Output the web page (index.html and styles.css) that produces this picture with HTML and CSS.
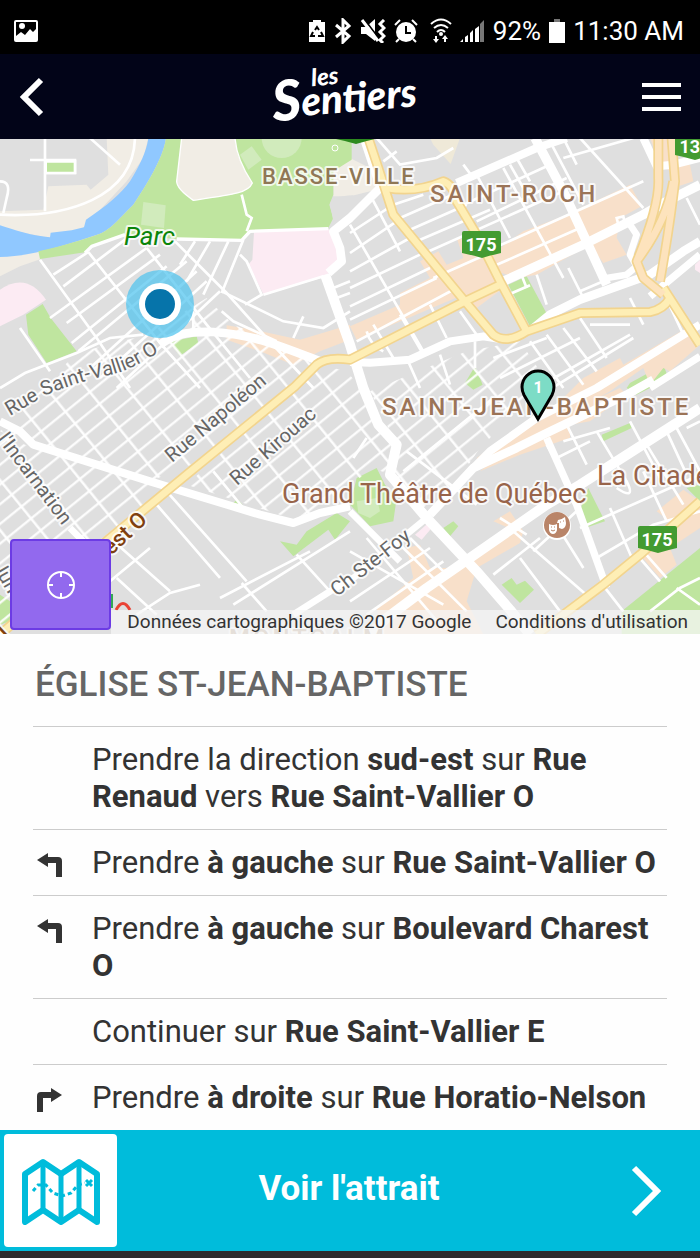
FILE: index.html
```html
<!DOCTYPE html>
<html lang="fr">
  <head>
    <meta charset="UTF-8" />
    <meta name="viewport" content="width=device-width, initial-scale=1" />
    <title>Les Sentiers</title>
    <link rel="stylesheet" href="styles.css">
  </head>
  <body>
    <div class="status">
      <svg class="status-photo" width="24" height="24" viewBox="0 0 24 24">
        <rect x="1" y="2" width="22" height="20" rx="1" fill="none" stroke="#fff" stroke-width="2" />
        <circle cx="8" cy="7" r="3" fill="#fff" />
        <path d="M2 17l5-4 4 3 5-6 3 3 3-3v11H2z" fill="#fff" />
      </svg>
      <!-- battery saver -->
      <svg width="18" height="24" viewBox="0 0 18 24">
        <path d="M1 3h4V1h8v2h4v20H1z" fill="#fff" />
        <path d="M7 11l2-3 2 3M5 13l-2 4h4M13 13l2 4h-5" fill="none" stroke="#000" stroke-width="2" />
      </svg>
      <!-- bluetooth -->
      <svg width="18" height="26" viewBox="0 0 18 26">
        <path d="M2 7l13 11-6 6V2l6 6L2 19" fill="none" stroke="#fff" stroke-width="3" />
      </svg>
      <!-- vibrate -->
      <svg width="26" height="24" viewBox="0 0 26 24">
        <path d="M1 8h5l9-8v22l-9-7H1z" fill="#fff" />
        <path d="M4 0l16 21" stroke="#000" stroke-width="2" />
        <path d="M2 1l16 21" stroke="#fff" stroke-width="3" />
        <path d="M24 1l-4 4 4 4-4 4 4 4-4 4 3 3" fill="none" stroke="#fff" stroke-width="3" />
      </svg>
      <!-- alarm -->
      <svg width="24" height="24" viewBox="0 0 24 24">
        <circle cx="12" cy="13" r="10" fill="#fff" />
        <path d="M1 6l5-5M23 6l-5-5M5 20l-3 3M19 20l3 3" stroke="#fff" stroke-width="2" />
        <path d="M12 7v7h5" fill="none" stroke="#000" stroke-width="2" />
      </svg>
      <svg class="status-wifi" width="22" height="26" viewBox="0 0 22 26">
        <path d="M1 6q10-9 20 0M4 10q7-6 14 0M7 14q4-4 8 0" fill="none" stroke="#fff" stroke-width="2" />
        <circle cx="11" cy="16" r="2" fill="#fff" />
        <path d="M6 18v5M15 24v-4" stroke="#fff" stroke-width="2" />
        <path d="M3 21h6l-3 4zM12 21h6l-3-4z" fill="#fff" />
      </svg>
      <svg width="25" height="24" viewBox="0 0 25 24">
        <path d="M0 23l3-3v3zM5 23v-5l3-2v7zM10 23v-9l3-3v12zM15 23V10l4-3v16z" fill="#fff" />
        <path d="M20 23V5l4-4v22z" fill="#777" />
      </svg>
      <span>92%</span>
      <svg class="status-battery" width="16" height="24" viewBox="0 0 16 24">
        <path d="M0 3h16v21H0z" fill="#fff" />
        <path d="M5 0h6v3H5z" fill="#777" />
      </svg>
      <span class="status-time">11:30 AM</span>
    </div>

    <header class="header">
      <a href="#" aria-label="Retour">
        <svg width="26" height="40" viewBox="0 0 26 40">
          <path d="M22 3L5 20l17 17" fill="none" stroke="#fff" stroke-width="6" />
        </svg>
      </a>
      <svg class="logo" width="170" height="66" viewBox="0 0 170 66">
        <g transform="rotate(-5 90 46)">
          <text class="logo-small" x="55" y="19">les</text>
          <text class="logo-text" x="14" y="48"><tspan class="logo-cap" dy="3">S</tspan><tspan dy="-3">entiers</tspan></text>
        </g>
      </svg>
      <button class="menu" aria-label="Menu">
        <span></span>
        <span></span>
        <span></span>
      </button>
    </header>

    <div class="map">
      <svg class="map-canvas" viewBox="0 1 700 495">
        <defs>
          <pattern id="blocks" width="94" height="46" patternUnits="userSpaceOnUse" patternTransform="translate(20 12) rotate(-39)">
            <path d="M0 4H94M4 0V46" stroke="#fff" stroke-width="7" />
          </pattern>
          <path id="saintVallier" d="M10 278L46 257Q80 243 110 237Q140 230 180 199" />
          <path id="shield" d="M2 0H37Q39 0 39 2V22Q30 24 20 27Q10 24 0 22V2Q0 0 2 0Z" />
        </defs>

        <rect y="1" width="700" height="495" fill="#dfdfdf" />
        <g transform="scale(.33333)">
          <!-- ground -->
          <g fill="#f1ede5">
            <path d="M320 0L445 0L430 60L380 130L250 270L150 300L0 270V220L130 215L145 145L260 140L272 155L325 110Z" />
            <path d="M0 350L118 335L125 362L60 385L0 415Z" />
            <path d="M1050 60L1150 110V150L1050 175H1000V100Z" />
            <path d="M1300 20L1352 78L1380 0H1290Z" fill="#efe9d8" />
          </g>
          <path d="M445 0H498C490 60 440 140 400 200C350 250 330 275 300 287C200 320 100 355 0 357V262C40 275 100 295 150 298L152 284L215 277L252 268L258 245C320 205 365 165 390 130C420 80 440 40 445 0Z" fill="#90c8ff" />
          <g fill="#bfe59f">
            <path d="M498 0H1055V65L1000 100V170L988 200L1000 240L985 270L750 283L728 305L530 303L375 290L270 325L260 342L120 363L115 340C200 320 250 305 300 287C330 275 350 250 400 200C440 140 490 60 498 0Z" />
            <path d="M78 530L128 498L152 540L230 640L140 675L85 590Z" />
            <path d="M508 612L590 595L595 615L540 653Z" />
            <path d="M1525 440L1580 415L1642 530L1590 565Z" />
            <path d="M1890 735L1990 680L2005 720L1950 750L1910 770L1880 750Z" />
            <path d="M1395 735L1425 685L1448 740L1420 755Z" />
            <path d="M840 1210L890 1220L920 1180L1010 1125L1050 1150L1005 1205L985 1175L880 1255Z" />
            <path d="M700 1095L712 1083L728 1100ZM0 1370L30 1390V1450L0 1460Z" />
            <path d="M1070 1020L1130 990L1155 1040L1190 1080L1180 1150L1110 1165L1050 1100Z" />
            <path d="M1330 1170L1360 1150L1375 1165L1350 1195Z" />
            <path d="M1505 1340L1535 1320L1550 1340L1575 1328L1602 1355L1560 1395Z" />
            <path d="M1735 1130L1765 1050L1815 1150L1755 1170Z" />
            <path d="M1805 890L1890 855L1895 870L1810 910Z" />
            <path d="M1865 1420L2100 1230V1490H1865Z" />
            <path d="M2060 1050L2100 1040V1090Z" />
          </g>
          <g fill="#d1ebbc">
            <path d="M430 192L497 202L492 270L423 260Z" />
            <path d="M720 50L755 25L785 65L745 95Z" />
            <circle cx="845" cy="0" r="60" />
            <path d="M1070 1090L1130 1080L1140 1120L1110 1140L1075 1125Z" />
          </g>
          <path d="M545 0H705C708 40 720 80 757 135C745 165 700 170 580 187C555 170 530 150 530 130Z" fill="#f1ede5" stroke="#fff" stroke-width="4" />
          <path d="M990 200Q990 175 1060 172V250L1000 250Z" fill="#dfdfdf" />
          <g fill="#fcebf3">
            <path d="M762 283L985 272L1025 350L1010 390L965 420L790 468L745 380L757 365Z" />
            <path d="M0 455Q80 400 138 485L70 530L0 565Z" />
            <path d="M1245 1190L1285 1155L1295 1170L1265 1205ZM2085 380L2100 365V405L2085 395Z" />
          </g>
          <!-- shopping areas -->
          <g fill="#f8e0ca">
            <path d="M680 562L760 575L900 605L1050 560V605L960 640L880 680L780 640L680 605Z" />
            <path d="M1050 565L1200 500V465L1290 420L1260 370L1315 340L1340 380L1390 360L1370 300L1500 330L1570 280L1690 235L1890 140L1925 205L1860 240L1850 300L1880 350L1810 375L1770 320L1610 410L1550 420L1490 400L1510 450L1430 510L1390 470L1070 605Z" />
            <path d="M1950 0H2030V75L2070 80L2080 130L2035 145L2010 100L1980 80Z" />
            <path d="M1750 720L1860 660L1870 680L2060 570L2100 620L2010 700L1990 690L1950 740L1930 690L1830 760L1620 880L1460 970L1440 990L1430 960L1470 930L1620 850Z" />
            <path d="M1440 1000L1560 950L1710 900V860L1770 850L1880 770L1860 750L1600 870Z" />
            <path d="M1480 1150L1530 1120L1570 1180L1560 1215L1430 1290L1400 1390L1450 1490H1150L1130 1410L1240 1320L1220 1230L1260 1220L1290 1290L1380 1290L1550 1180Z" />
            <path d="M1970 1120L2050 1055L2100 1090V1170L2010 1230L2030 1280L1980 1320L1920 1250L2010 1150Z" />
          </g>

          <!-- dense street grids -->
          <path fill="url(#blocks)" d="M0 880L230 645L440 590L620 480L700 560L850 620L940 680L600 970L450 1030L100 920Z" />
          <path fill="url(#blocks)" d="M960 680L1040 700L1090 760L1130 860L1190 920L1170 1010L1120 990L900 1150L560 1040Z" />
          <path fill="url(#blocks)" d="M0 890L100 930L500 1050L330 1200L0 1470Z" />
          <path fill="url(#blocks)" d="M1110 760L1400 640L1560 610L1640 730L1440 930L1350 1060L1250 1120L1180 1030L1190 920Z" />

          <!-- small streets -->
          <g class="street">
            <path d="M135 0V220M90 66H225V105H137M270 0L360 80M0 130Q35 130 20 180L10 225" />
            <path d="M137 70h88v35h-88z" fill="#bfe59f" />
            <path d="M120 365L290 600L390 750M265 342L480 615L600 750M440 330L620 560L750 720M525 310L680 465L800 600L940 750" />
            <path d="M160 410L265 342M190 445L375 305M150 540L440 330M200 555L480 350M215 615L500 385M235 640L560 370M270 690L590 400M300 720L620 430M350 750L660 460" />
            <path d="M585 310L540 380M630 310L560 430M685 310L610 470M730 305L665 465M720 350L740 370L785 470L735 500" />
            <path d="M665 460L850 550L970 570L1050 520M910 535L880 600M580 520V580M665 520L700 550L830 610" />
            <path d="M0 750L75 705L230 645L330 600L430 590M60 570L150 700" />
            <path d="M725 170L740 230L755 240L740 280M790 470L970 415M1000 450L1050 430M1010 480L1050 465" />
            <path d="M1050 285L1180 200L1270 170M1200 240L1370 165M1220 280L1400 200M1250 310L1470 215M1275 345L1690 160" />
            <path d="M1050 345L1190 250M1050 400L1230 300M1050 450L1260 350M1050 505L1290 390M1050 545L1310 420M1070 610L1370 450" />
            <path d="M1460 340L1930 130M1480 385L1740 270M1430 250L1700 120M1390 200L1650 80M1300 420L1480 340M1150 70L1190 40" />
            <path d="M1050 260L1270 640M1110 170L1200 340M1430 110L1530 300M1510 90L1690 420M1530 80L1570 150M1550 60L1590 130M1650 10L1750 200M1690 0L1730 80M1740 0L1930 210M1690 60L1900 0" />
            <path d="M1610 410L1640 500M1705 390L1750 480M1560 400L1580 450M1740 460L1810 430M1850 240L1870 235L1875 260L1855 260Z" />
            <path d="M1120 560L1180 660M1200 530L1270 650M1290 500L1340 600M1380 520L1430 590M1480 660L1640 600M1425 610V690M1320 650L1350 740M1220 660L1260 750" />
            <path d="M1590 610L1690 750M1640 590L1750 740M1690 570L1790 700M1740 540L1820 660M1500 720L1740 600M1610 750L1890 590M1770 560H1890M1890 480L1930 560" />
            <path d="M1525 470L1590 442" />
            <path d="M1100 580Q1110 620 1150 640M1130 0L1200 80L1310 60L1360 30M1390 80L1420 120M2060 180L2100 260M1980 440L2050 590" />
            <path d="M500 1060L740 1330M330 1200L510 1360M470 1100L660 1320M640 1000L730 1110M350 1320L470 1430M660 1380L930 1240" />
            <path d="M410 1430L510 1365L600 1340M330 1330L450 1230M725 1335L800 1420M700 1400L1050 1180M890 1250L990 1360" />
            <path d="M1050 1240L1330 1400M1100 1200L1320 1460M1180 1200L1400 1420M1050 1390L1290 1230M1100 1430L1330 1270M1230 1200L1330 1300L1400 1280" />
            <path d="M1540 1180L1770 1380M1560 1260L1680 1420M1480 1310L1620 1200M1600 1240L1740 1110M1500 1140L1580 1190M1650 1130L1750 1290" />
            <path d="M1740 1170L2010 1050L2100 1010M1790 1260L1960 1160L2100 1120M1830 1110L1900 1270M1930 1000L2000 1150M1850 1050Q1910 1090 1880 1030L1790 880" />
            <path d="M1690 910L1830 870M1700 860L1760 980M1670 960L1770 910M1640 920L1700 1030M1890 850L1980 1020M1940 920L2050 1100M2000 880L2060 1010M2030 870L2100 1000M2060 870L2100 850" />
            <path d="M1910 1250L1980 1330M1930 1240L2000 1320M1800 1330L1870 1420M1950 1420L2040 1350L2100 1320M2030 1350L2100 1400" />
            <path d="M1220 940L1430 1100M1210 1000L1480 780M1060 960L1100 900M1640 760L1900 600" />
          </g>
          <path class="street" d="M0 230C200 240 400 180 405 0" />

          <!-- avenues -->
          <g class="avenue">
            <path d="M255 345L275 325L375 290M530 303L725 307L750 280L985 272" stroke-width="10" />
            <path d="M480 620C520 590 560 580 640 582C760 590 830 620 960 670" stroke-width="26" />
            <path d="M1140 150L1050 240L1000 280L1020 330L1025 370L985 405" stroke-width="26" />
            <path d="M975 410L1050 620L1090 750L1135 860L1190 920L1170 1010L1280 1140L1430 1300L1530 1415L1590 1490" stroke-width="30" />
            <path d="M1090 0L1110 60L1140 150" stroke-width="22" />
            <path d="M0 850L60 880L100 920L450 1030L780 1130L880 1155L960 1125L1050 1105" stroke-width="24" />
            <path d="M1370 135L1610 30L1700 0M1930 0L1970 85L2020 80L2100 60" stroke-width="24" />
            <path d="M1605 0L1690 160L1820 440M1510 430L1750 320L1930 230L2000 190L2100 140" stroke-width="28" />
            <path d="M1595 575L1650 530L1740 485L1950 410L2050 340L2100 310" stroke-width="26" />
            <path d="M1050 672L1110 674L1230 665L1350 610L1450 595L1510 605" stroke-width="24" />
            <path d="M1890 260L1910 290L1890 350L1910 385L1880 410L1820 420" stroke-width="20" />
            <path d="M1950 475L2100 350M1950 750L2100 655" stroke-width="22" />
            <path d="M2100 560L1790 750L1610 840L1470 940L1420 990" stroke-width="24" />
            <path d="M1290 1130L1420 990L1550 930L1650 880L1880 770L1960 725" stroke-width="26" />
            <path d="M2100 810L1740 1040L1640 1100L1280 1350L1160 1440L1110 1490" stroke-width="30" />
            <path d="M1640 900L1730 1100L1820 1350" stroke-width="22" />
            <path d="M880 1430L990 1360L1060 1320L1280 1140M1050 1120L1200 1270" stroke-width="20" />
            <path d="M210 1170L250 1210" stroke-width="20" />
          </g>

          <!-- main roads, casing then fill -->
          <g class="road-edge">
            <path d="M0 1490L330 1200L560 1010L885 745L950 680Q980 655 1050 665L1395 490L1500 440" />
            <path d="M1105 0L1135 90L1180 230L1395 490L1480 590Q1520 620 1580 580L1740 525L1950 522Q1990 515 2010 480" />
            <path d="M1160 150Q1250 165 1330 130Q1360 140 1370 190L1430 290L1500 430L1580 580M1990 450L2100 620M1610 1490L1810 1340L1920 1250L2100 1090" />
            <path d="M1975 0V120Q1980 200 1910 370L1930 420L1990 470M2015 0L2025 130Q2010 260 1980 430M1910 370Q2000 250 2020 130" />
          </g>
          <g class="road">
            <path d="M0 1490L330 1200L560 1010L885 745L950 680Q980 655 1050 665L1395 490L1500 440" />
            <path d="M1105 0L1135 90L1180 230L1395 490L1480 590Q1520 620 1580 580L1740 525L1950 522Q1990 515 2010 480" />
            <path d="M1160 150Q1250 165 1330 130Q1360 140 1370 190L1430 290L1500 430L1580 580M1990 450L2100 620M1610 1490L1810 1340L1920 1250L2100 1090" />
            <path d="M1975 0V120Q1980 200 1910 370L1930 420L1990 470M2015 0L2025 130Q2010 260 1980 430M1910 370Q2000 250 2020 130" stroke="#fde3bd" />
          </g>
        </g>

        <!-- place names -->
        <text class="label area" x="262" y="46">BASSE-VILLE</text>
        <text class="label district" x="430" y="64">SAINT-ROCH</text>
        <text class="label district" x="382" y="277">SAINT-JEAN-BAPTISTE</text>
        <text class="label district faint" x="229" y="508">MONTCALM</text>
        <text class="label park" x="124" y="107">Parc</text>
        <text class="label place" x="282" y="365">Grand Théâtre de Québec</text>
        <text class="label place" x="597" y="347">La Citadelle</text>
        <text class="label way"><textPath href="#saintVallier">Rue Saint-Vallier O</textPath></text>
        <text class="label way" transform="translate(172 325) rotate(-40)">Rue Napoléon</text>
        <text class="label way" transform="translate(237 348) rotate(-41)">Rue Kirouac</text>
        <text class="label way" transform="translate(-3 301) rotate(53)">l'Incarnation</text>
        <text class="label way" transform="translate(337 459) rotate(-38)">Ch Ste-Foy</text>
        <text class="label way" transform="translate(-8 428) rotate(60)">Jun</text>
        <text class="label highway" transform="translate(111 418) rotate(-43)">est O</text>
        <text class="label highway" transform="translate(-8 512) rotate(-43)">ull</text>

        <use href="#shield" x="462" y="93" fill="#439b31" />
        <text class="shield-text" x="481" y="113">175</text>
        <use href="#shield" x="638" y="388" fill="#439b31" />
        <text class="shield-text" x="657" y="408">175</text>
        <use href="#shield" x="675" y="-5" fill="#439b31" />
        <text class="shield-text" x="695" y="15">136</text>
        <use href="#shield" x="336" y="-21" fill="#2d8a1f" />

        <circle cx="335" cy="10" r="3" fill="none" stroke="#fff" />

        <!-- theatre -->
        <circle cx="557" cy="388" r="14" fill="#fff" />
        <circle cx="557" cy="387" r="13" fill="#b98468" />
        <path d="M549 386q4 2 8 0v6q-1 4-4 4t-4-4zM558 382q3 0 7-3l1 6q0 5-4 6l-3-1v-5h-2z" fill="#fff" />
        <path d="M551 389h1M554 389h1M551 392q2 2 4 0M560 384h1M563 383h1" stroke="#b98468" fill="none" />

        <!-- logo behind the locate button -->
        <path d="M116 472q7-13 14 0" fill="none" stroke="#ea4335" stroke-width="3" />
        <path d="M111 456h2v14h-2z" fill="#34a853" />

        <!-- current position -->
        <circle cx="160" cy="166" r="34" fill="#4fc4ee" opacity=".72" />
        <circle cx="160" cy="166" r="21" fill="#fff" />
        <circle cx="160" cy="166" r="15" fill="#0674aa" />

        <!-- destination -->
        <path d="M538 281L524 257Q522 253 522 249A16 16 0 0 1 554 249Q554 253 552 257Z" fill="#7ddcc6" stroke="#000" stroke-width="3" />
        <text class="pin-text" x="538" y="255">1</text>
      </svg>

      <div class="credits">
        <span>Données cartographiques ©2017 Google</span>
        <a href="#">Conditions d'utilisation</a>
      </div>
      <button class="locate" aria-label="Ma position">
        <svg width="30" height="30" viewBox="0 0 30 30" fill="none" stroke="#fff" stroke-width="2">
          <circle cx="15" cy="15" r="13" />
          <path d="M15 2v5M15 23v5M2 15h5M23 15h5" />
        </svg>
      </button>
    </div>

    <main class="directions">
      <h1>ÉGLISE ST-JEAN-BAPTISTE</h1>
      <ol>
        <li>
          <span class="turn"></span>
          <p>Prendre la direction <b>sud-est</b> sur <b>Rue Renaud</b> vers <b>Rue Saint-Vallier O</b></p>
        </li>
        <li>
          <svg class="turn" viewBox="0 0 26 26">
            <path d="M0 8l11-7v4h10q4 0 4 4v16h-6V11h-8v4z" />
          </svg>
          <p>Prendre <b>à gauche</b> sur <b>Rue Saint-Vallier O</b></p>
        </li>
        <li>
          <svg class="turn" viewBox="0 0 26 26">
            <path d="M0 8l11-7v4h10q4 0 4 4v16h-6V11h-8v4z" />
          </svg>
          <p>Prendre <b>à gauche</b> sur <b>Boulevard Charest O</b></p>
        </li>
        <li>
          <span class="turn"></span>
          <p>Continuer sur <b>Rue Saint-Vallier E</b></p>
        </li>
        <li>
          <svg class="turn" viewBox="0 0 26 26">
            <path d="M25 8L14 1v4H4q-4 0-4 4v16h6V11h8v4z" />
          </svg>
          <p>Prendre <b>à droite</b> sur <b>Rue Horatio-Nelson</b></p>
        </li>
      </ol>
    </main>

    <footer class="footer">
      <button class="map-button" aria-label="Carte">
        <svg width="78" height="68" viewBox="0 0 78 68" fill="none" stroke="#00bcdb">
          <path d="M3 17L21 5L39 17L57 5L75 17V65L57 53L39 65L21 53L3 65Z" stroke-width="6" stroke-linejoin="round" />
          <path d="M21 5V53M39 17V65M57 5V53" stroke-width="5" />
          <path d="M11 34L16 28L24 28L31 36L40 39L49 36L56 28L63 26" stroke-width="3" stroke-dasharray="4 3" />
          <path d="M64 23l6 6M70 23l-6 6" stroke-width="3" />
        </svg>
      </button>
      <a class="visit" href="#">Voir l'attrait</a>
      <svg class="next" width="32" height="52" viewBox="0 0 32 52">
        <path d="M4 3L27 26L4 49" fill="none" stroke="#fff" stroke-width="6" />
      </svg>
    </footer>
  </body>
</html>
```
FILE: styles.css
```css
* {
  box-sizing: border-box;
}

body {
  margin: 0;
  min-height: 100vh;
  display: flex;
  flex-direction: column;
  font-family: Roboto, "Liberation Sans", sans-serif;
  background-color: #fefefe;
  color: #333;
}

button {
  border: none;
  padding: 0;
  cursor: pointer;
}

svg {
  display: block;
  flex-shrink: 0;
}

/* status bar */
.status {
  display: flex;
  align-items: center;
  gap: 8px;
  height: 54px;
  padding: 8px 16px 0 14px;
  background-color: #000;
  color: #fff;
  font-size: 26px;
}

.status-photo {
  margin-right: auto;
}

.status-wifi {
  margin-left: 4px;
}

/* header */
.header {
  display: flex;
  align-items: center;
  justify-content: space-between;
  height: 85px;
  padding: 0 19px;
  background-color: #020418;
}

.logo {
  overflow: visible;
  fill: #fff;
  font-family: Lato, sans-serif;
  font-style: italic;
  font-weight: 900;
}

.logo-small {
  font-size: 24px;
}

.logo-text {
  font-size: 40px;
}

.logo-cap {
  font-size: 56px;
}

.menu {
  display: flex;
  flex-direction: column;
  gap: 8px;
  width: 39px;
  background: none;
}

.menu span {
  height: 4px;
  background-color: #fff;
}

/* map */
.map {
  position: relative;
}

.map-canvas {
  width: 100%;
}

.street {
  fill: none;
  stroke: #fff;
  stroke-width: 8px;
}

.avenue {
  fill: none;
  stroke: #fff;
  stroke-linejoin: round;
}

.road-edge {
  fill: none;
  stroke: #f2d48e;
  stroke-width: 30px;
  stroke-linejoin: round;
}

.road {
  fill: none;
  stroke: #feeeb5;
  stroke-width: 20px;
  stroke-linejoin: round;
}

.label {
  stroke: rgba(255, 255, 255, 0.8);
  stroke-width: 4px;
  stroke-linejoin: round;
  paint-order: stroke;
}

.area {
  font-size: 22px;
  font-weight: 500;
  letter-spacing: 2px;
  fill: #8f7755;
}

.district {
  font-size: 24px;
  font-weight: 500;
  letter-spacing: 3px;
  fill: #9b7457;
}

.faint {
  fill: #b59c85;
}

.park {
  font-size: 26px;
  font-style: italic;
  fill: #0a850a;
}

.place {
  font-size: 27px;
  fill: #98644a;
}

.way {
  font-size: 20px;
  fill: #666;
}

.highway {
  font-size: 22px;
  font-weight: 500;
  fill: #80400f;
}

.shield-text,
.pin-text {
  font-size: 18px;
  font-weight: 700;
  text-anchor: middle;
  fill: #fff;
}

.pin-text {
  font-size: 16px;
}

.locate {
  position: absolute;
  left: 10px;
  bottom: 4px;
  width: 101px;
  height: 91px;
  display: flex;
  align-items: center;
  justify-content: center;
  background-color: #9269ee;
  border: 2px solid #6c3be4;
  border-radius: 4px;
}

.credits {
  position: absolute;
  right: 0;
  bottom: 0;
  display: flex;
  gap: 24px;
  padding: 0 12px 0 16px;
  font-size: 19px;
  line-height: 24px;
  background-color: rgba(245, 245, 245, 0.75);
  white-space: nowrap;
}

.credits a {
  color: #333;
  text-decoration: none;
}

/* directions */
.directions {
  flex: 1;
  padding: 30px 33px 0;
}

.directions h1 {
  margin: 0 0 20px;
  padding-left: 2px;
  font-size: 35px;
  line-height: 42px;
  font-weight: 500;
  color: #666;
}

.directions ol {
  margin: 0;
  padding: 0;
  list-style: none;
}

.directions li {
  display: flex;
  align-items: flex-start;
  gap: 29px;
  padding: 14px 0 14px 4px;
  border-top: 1px solid #ccc;
}

.directions p {
  margin: 0;
  font-size: 31px;
  line-height: 37px;
}

.turn {
  width: 26px;
  height: 26px;
  margin-top: 8px;
  flex-shrink: 0;
  fill: #333;
}

/* footer */
.footer {
  display: flex;
  align-items: center;
  padding: 4px 38px 4px 4px;
  background-color: #00bcdb;
  border-bottom: 7px solid #2d2d2d;
}

.map-button {
  display: flex;
  align-items: center;
  justify-content: center;
  width: 113px;
  height: 113px;
  background-color: #fff;
  border-radius: 4px;
}

.visit {
  flex: 1;
  padding: 0 49px 4px 0;
  text-align: center;
  font-size: 35px;
  font-weight: 700;
  color: #fff;
  text-decoration: none;
}
```
